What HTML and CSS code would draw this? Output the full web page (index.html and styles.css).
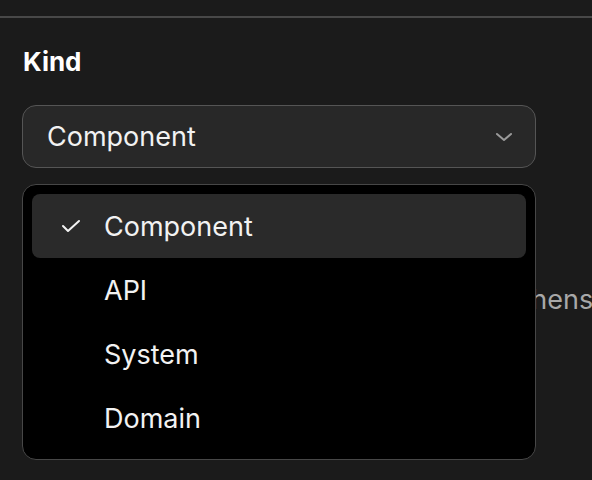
FILE: index.html
```html
<html>
  <head>
    <link rel="stylesheet" href="styles.css">
  </head>
  <body>
    <div class="topbar"></div>

    <section class="field">
      <label class="field-label">Kind</label>

      <div class="picker">
        <button class="picker-trigger" type="button">
          <span class="picker-value">Component</span>
          <svg class="picker-chevron" width="18" height="10" viewBox="0 0 18 10">
            <path d="M2 2 L9 8 L16 2" fill="none" stroke="currentColor" stroke-width="2" stroke-linecap="round" stroke-linejoin="round" />
          </svg>
        </button>

        <p class="field-help">Find a type that best suits it in a comprehensive catalog</p>

        <ul class="picker-menu">
          <li class="picker-option is-selected">
            <svg class="picker-check" width="20" height="14" viewBox="0 0 20 14">
              <path d="M2 7 L7 12 L18 2" fill="none" stroke="currentColor" stroke-width="2" stroke-linecap="round" stroke-linejoin="round" />
            </svg>
            Component
          </li>
          <li class="picker-option">API</li>
          <li class="picker-option">System</li>
          <li class="picker-option">Domain</li>
        </ul>
      </div>
    </section>
  </body>
</html>
```

FILE: styles.css
```css
body {
  margin: 0;
  background-color: #1b1b1b;
  font-family: Inter, "Noto Sans", sans-serif;
  color: #f2f2f2;
  overflow: hidden;
}

.topbar {
  height: 16px;
  border-bottom: 2px solid #484848;
}

.field {
  padding: 28px 22px 0 22px;
}

.field-label {
  display: block;
  font-size: 26px;
  font-weight: 700;
  color: #ffffff;
  padding-left: 1px;
}

.picker {
  position: relative;
  width: 514px;
  margin-top: 28px;
}

.picker-trigger {
  display: flex;
  align-items: center;
  justify-content: space-between;
  width: 100%;
  height: 63px;
  padding: 0 22px 0 24px;
  box-sizing: border-box;
  background: #282828;
  border: 1.5px solid #555555;
  border-radius: 14px;
  color: #f2f2f2;
  font-family: inherit;
  font-size: 27px;
}

.picker-chevron {
  color: #9a9a9a;
}

.field-help {
  margin: 0;
  padding-top: 115px;
  white-space: nowrap;
  font-size: 27px;
  color: #a8a8a8;
}

/* open menu sits over the help text */
.picker-menu {
  position: absolute;
  top: 79px;
  left: 0;
  width: 100%;
  box-sizing: border-box;
  margin: 0;
  padding: 9px;
  list-style: none;
  background: #000000;
  border: 1.5px solid #474747;
  border-radius: 14px;
}

.picker-option {
  position: relative;
  height: 64px;
  display: flex;
  align-items: center;
  padding-left: 72px;
  border-radius: 8px;
  font-size: 27px;
  color: #f2f2f2;
}

.picker-option.is-selected {
  background: #2a2a2a;
}

.picker-check {
  position: absolute;
  left: 29px;
  top: 25px;
  color: #f2f2f2;
}
```
